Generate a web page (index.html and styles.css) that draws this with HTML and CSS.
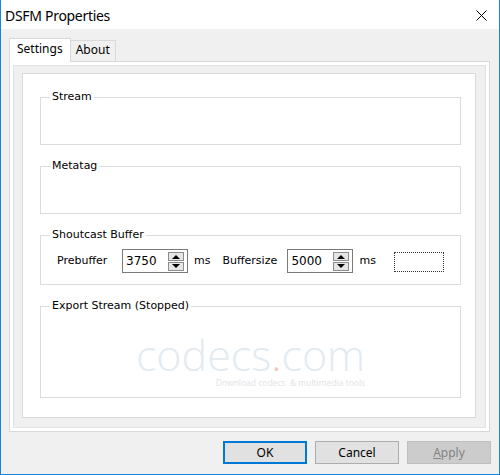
FILE: index.html
```html
<!DOCTYPE html>
<html lang="en">
<head>
  <meta charset="UTF-8">
  <title>DSFM Properties</title>
  <link rel="stylesheet" href="styles.css">
</head>
<body>
  <div class="window">
    <!-- Barra de título -->
    <div class="titlebar">
      <span class="title">DSFM Properties</span>
      <svg class="close" width="11" height="11" viewBox="0 0 11 11">
        <path d="M0.5 0.5 L10.5 10.5 M10.5 0.5 L0.5 10.5" stroke="#000" stroke-width="1" fill="none"/>
      </svg>
    </div>

    <div class="client">
      <div class="tabs">
        <div class="tab active">Settings</div>
        <div class="tab">About</div>
      </div>

      <div class="tabpage">
        <div class="frame">
          <div class="panel">
            <fieldset class="group">
              <legend>Stream</legend>
              <div class="group-body body-short"></div>
            </fieldset>

            <fieldset class="group">
              <legend>Metatag</legend>
              <div class="group-body body-short"></div>
            </fieldset>

            <fieldset class="group">
              <legend>Shoutcast Buffer</legend>
              <div class="group-body buffer-row">
                <span class="field-label">Prebuffer</span>
                <div class="spin-input">
                  <span class="spin-value">3750</span>
                  <svg class="spinner" width="16" height="19" viewBox="0 0 16 19">
                    <rect x="0.5" y="0.5" width="15" height="8" fill="#e6e6e6" stroke="#8c8c8c"/>
                    <rect x="0.5" y="10.5" width="15" height="8" fill="#e6e6e6" stroke="#8c8c8c"/>
                    <path d="M4 7 L8 3 L12 7 Z" fill="#000"/>
                    <path d="M4 12 L8 16 L12 12 Z" fill="#000"/>
                  </svg>
                </div>
                <span class="unit">ms</span>
                <span class="field-label">Buffersize</span>
                <div class="spin-input">
                  <span class="spin-value">5000</span>
                  <svg class="spinner" width="16" height="19" viewBox="0 0 16 19">
                    <rect x="0.5" y="0.5" width="15" height="8" fill="#e6e6e6" stroke="#8c8c8c"/>
                    <rect x="0.5" y="10.5" width="15" height="8" fill="#e6e6e6" stroke="#8c8c8c"/>
                    <path d="M4 7 L8 3 L12 7 Z" fill="#000"/>
                    <path d="M4 12 L8 16 L12 12 Z" fill="#000"/>
                  </svg>
                </div>
                <span class="unit">ms</span>
                <div class="focus-box"></div>
              </div>
            </fieldset>

            <fieldset class="group">
              <legend>Export Stream (Stopped)</legend>
              <div class="group-body body-export">
                <div class="watermark">
                  <div class="wm-logo">codecs<span class="wm-dot">.</span>com</div>
                  <div class="wm-sub">Download codecs &nbsp;&amp; multimedia tools</div>
                </div>
              </div>
            </fieldset>
          </div>
        </div>
      </div>

      <div class="buttons">
        <button class="btn default">OK</button>
        <button class="btn">Cancel</button>
        <button class="btn disabled"><u>A</u>pply</button>
      </div>
    </div>
  </div>
</body>
</html>
```

FILE: styles.css
```css
/* Ventana de diálogo */
body {
  margin: 0;
  background: #ffffff;
}
.window {
  width: 500px;
  height: 475px;
  box-sizing: border-box;
  border: 1px solid #1883d7;
  border-top: none;
  background: #f0f0f0;
  font-family: "DejaVu Sans", sans-serif;
  font-size: 11px;
  color: #000;
}
.titlebar {
  height: 29px;
  background: #ffffff;
  display: flex;
  align-items: center;
  justify-content: space-between;
  padding: 2px 12px 0 4px;
  box-sizing: border-box;
}
.title {
  font-family: "Noto Sans", sans-serif;
  font-size: 14px;
  letter-spacing: -0.3px;
  color: #000;
}
.close {
  display: block;
}
/* Zona cliente */
.client {
  padding: 9px 8px 10px 8px;
}
.tabs {
  display: flex;
  align-items: flex-end;
  height: 23px;
  font-family: "Noto Sans", sans-serif;
  font-size: 12px;
}
.tab {
  box-sizing: border-box;
  height: 21px;
  line-height: 16px;
  padding: 1px 5px 0 5px;
  border: 1px solid #d9d9d9;
  border-bottom: none;
  border-left: none;
  background: #f0f0f0;
}
.tab.active {
  position: relative;
  height: 24px;
  margin-bottom: -1px;
  padding: 2px 7px 0 7px;
  border-left: 1px solid #d9d9d9;
  background: #ffffff;
}
.tabpage {
  box-sizing: border-box;
  width: 481px;
  height: 371px;
  border: 1px solid #d9d9d9;
  background: #ffffff;
  padding: 3px;
}
.frame {
  box-sizing: border-box;
  height: 100%;
  border: 1px solid #e3e3e3;
  background: #f0f0f0;
  padding: 7px 9px 9px 8px;
}
.panel {
  box-sizing: border-box;
  height: 345px;
  border: 1px solid #dadada;
  background: #ffffff;
  padding: 16px 14px 0 17px;
  display: flex;
  flex-direction: column;
  gap: 14px;
}
/* Grupos */
.group {
  margin: 0;
  padding: 0 9px;
  min-width: 0;
  border: 1px solid #dcdcdc;
}
.group legend {
  padding: 0 2px;
  line-height: 14px;
}
.body-short {
  height: 40px;
}
.buffer-row {
  height: 42px;
  box-sizing: border-box;
  padding: 7px 0 0 7px;
  display: flex;
  align-items: flex-start;
}
.buffer-row > span {
  line-height: 24px;
}
.field-label {
  width: 65px;
  flex: none;
}
.unit {
  margin: 0 12px 0 6px;
}
.spin-input {
  box-sizing: border-box;
  width: 66px;
  height: 24px;
  border: 1px solid #7a7a7a;
  background: #fff;
  display: flex;
  align-items: center;
  padding: 0 3px 0 3px;
}
.spin-value {
  flex: 1;
  font-size: 12px;
}
.spinner {
  display: block;
}
.focus-box {
  box-sizing: border-box;
  width: 50px;
  height: 20px;
  margin: 3px 0 0 6px;
  border: 1px dotted #333;
}
.body-export {
  box-sizing: border-box;
  height: 84px;
  padding-top: 20px;
}
/* Marca de agua */
.watermark {
  width: fit-content;
  margin: 0 auto;
  text-align: right;
  font-family: "Open Sans", sans-serif;
}
.wm-logo {
  font-size: 43px;
  font-weight: 300;
  line-height: 43px;
  color: #e3ebf1;
}
.wm-dot {
  color: #f4c6bd;
}
.wm-sub {
  font-size: 8.5px;
  line-height: 11px;
  margin-top: 1px;
  color: #dfe3e7;
}
/* Botones */
.buttons {
  display: flex;
  justify-content: flex-end;
  gap: 8px;
  margin-top: 9px;
}
.btn {
  box-sizing: border-box;
  width: 84px;
  height: 23px;
  padding: 0;
  font-family: "Noto Sans", sans-serif;
  font-size: 12px;
  color: #000;
  background: #e1e1e1;
  border: 1px solid #adadad;
}
.btn.default {
  border-color: #0078d7;
  box-shadow: inset 0 0 0 1px #0078d7;
}
.btn.disabled {
  background: #cccccc;
  border-color: #bfbfbf;
  color: #838383;
}
```
